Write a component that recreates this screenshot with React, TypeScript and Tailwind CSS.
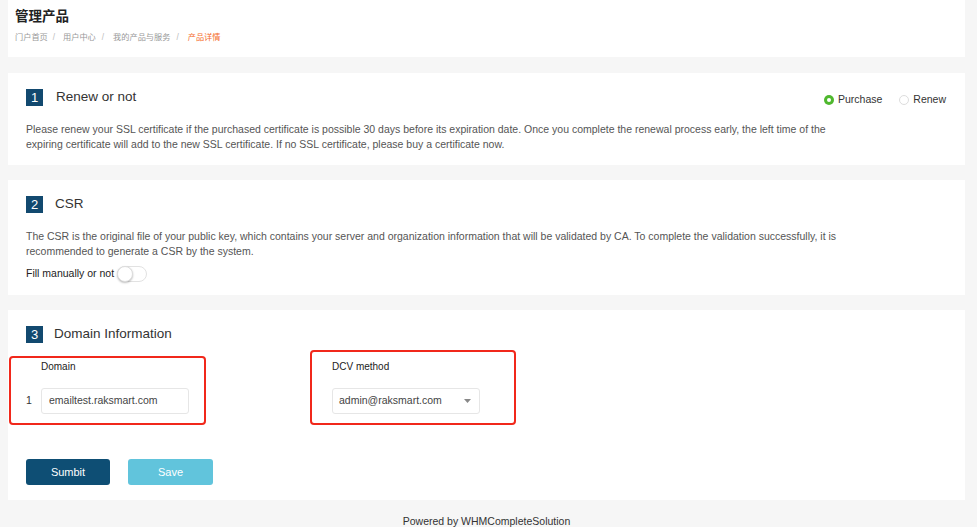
import React from "react";

const FONT = { fontFamily: '"Liberation Sans", "Noto Sans CJK SC", Arial, sans-serif' };

function NumBox({ n }: { n: string }) {
  return (
    <div className="w-[17px] h-[17px] bg-[#12496f] text-white text-[13px] leading-[17px] text-center">
      {n}
    </div>
  );
}

function SectionTitle({ n, title, gap }: { n: string; title: string; gap: string }) {
  return (
    <div className="flex items-center h-[17px]">
      <NumBox n={n} />
      <span className={`${gap} text-[13.5px] text-[#333]`}>{title}</span>
    </div>
  );
}

export default function App() {
  return (
    <div style={FONT} className="min-h-[527px] bg-[#f6f6f6] pl-[8px] pr-[12px] text-[#333]">
      <div className="bg-white h-[57px] pl-[7px] pt-[8px]">
        <div className="text-[13.5px] leading-[18px] font-semibold text-[#222]">管理产品</div>
        <div className="mt-[6px] text-[8.2px] leading-[12px] text-[#999] flex items-center">
          <span>门户首页</span>
          <span className="ml-[5px] mr-[8px] text-[#bbb]">/</span>
          <span>用户中心</span>
          <span className="ml-[6px] mr-[9px] text-[#bbb]">/</span>
          <span>我的产品与服务</span>
          <span className="ml-[6px] mr-[9px] text-[#bbb]">/</span>
          <span className="text-[#f56b2a]">产品详情</span>
        </div>
      </div>

      <div className="mt-[16px] bg-white h-[92px] pl-[18px] pr-[19px] pt-[16px]">
        <div className="flex items-start justify-between">
          <SectionTitle n="1" title="Renew or not" gap="ml-[13px]" />
          <div className="flex items-center mt-[3px] text-[10.5px] text-[#333]">
            <span className="w-[10px] h-[10px] rounded-full bg-[#4fb82e] flex items-center justify-center">
              <span className="w-[4px] h-[4px] rounded-full bg-white" />
            </span>
            <span className="ml-[4px]">Purchase</span>
            <span className="ml-[17px] w-[10px] h-[10px] rounded-full border border-[#ddd] bg-white" />
            <span className="ml-[4px]">Renew</span>
          </div>
        </div>
        <p className="mt-[14px] text-[10.5px] leading-[15px] text-[#555]">
          Please renew your SSL certificate if the purchased certificate is possible 30 days before its expiration date. Once you complete the renewal process early, the left time of the
          <br />
          expiring certificate will add to the new SSL certificate. If no SSL certificate, please buy a certificate now.
        </p>
      </div>

      <div className="mt-[15px] bg-white h-[115px] pl-[18px] pr-[19px] pt-[16px]">
        <SectionTitle n="2" title="CSR" gap="ml-[12px]" />
        <p className="mt-[16px] text-[10.5px] leading-[15px] text-[#555]">
          The CSR is the original file of your public key, which contains your server and organization information that will be validated by CA. To complete the validation successfully, it is
          <br />
          recommended to generate a CSR by the system.
        </p>
        <div className="mt-[7px] flex items-center text-[10.5px] text-[#222]">
          <span>Fill manually or not</span>
          <span className="ml-[3px] w-[30px] h-[16px] rounded-full border border-[#e2e2e2] bg-white relative">
            <span className="absolute left-[-1px] top-[-1px] w-[16px] h-[16px] rounded-full bg-white border border-[#ddd] shadow-[0_1px_2px_rgba(0,0,0,0.25)]" />
          </span>
        </div>
      </div>

      <div className="mt-[15px] bg-white h-[190px] pl-[18px] pr-[19px] pt-[16px]">
        <SectionTitle n="3" title="Domain Information" gap="ml-[11px]" />
        <div className="mt-[7px] flex items-start">
          <div className="-ml-[17px] mt-[6px] w-[197px] h-[69px] border-2 border-[#f1281b] rounded-[4px] pt-[2px]">
            <div className="pl-[30px] text-[10px] leading-[14px] text-[#222]">Domain</div>
            <div className="mt-[14px] flex items-center">
              <span className="w-[30px] pl-[15px] text-[10.5px] text-[#333]">1</span>
              <div className="w-[148px] h-[26px] border border-[#e6e6e6] rounded-[3px] pl-[7px] flex items-center text-[10.5px] text-[#444]">
                emailtest.raksmart.com
              </div>
            </div>
          </div>
          <div className="ml-[104px] w-[206px] h-[75px] border-2 border-[#f1281b] rounded-[4px] pt-[8px]">
            <div className="pl-[20px] text-[10px] leading-[14px] text-[#222]">DCV method</div>
            <div className="mt-[14px] ml-[20px] w-[148px] h-[26px] border border-[#e6e6e6] rounded-[3px] pl-[6px] pr-[8px] flex items-center justify-between text-[10.5px] text-[#444]">
              <span>admin@raksmart.com</span>
              <svg width="7" height="4" viewBox="0 0 7 4">
                <path d="M0 0 L7 0 L3.5 4 Z" fill="#888" />
              </svg>
            </div>
          </div>
        </div>
        <div className="mt-[34px] flex items-center">
          <button className="w-[84px] h-[26px] rounded-[3px] bg-[#0e4e74] text-white text-[11px]">Sumbit</button>
          <button className="ml-[18px] w-[85px] h-[26px] rounded-[3px] bg-[#61c4dc] text-white text-[11px]">Save</button>
        </div>
      </div>

      <div className="pt-[14px] text-center text-[10.5px] leading-[14px] text-[#333]">
        Powered by WHMCompleteSolution
      </div>
    </div>
  );
}
